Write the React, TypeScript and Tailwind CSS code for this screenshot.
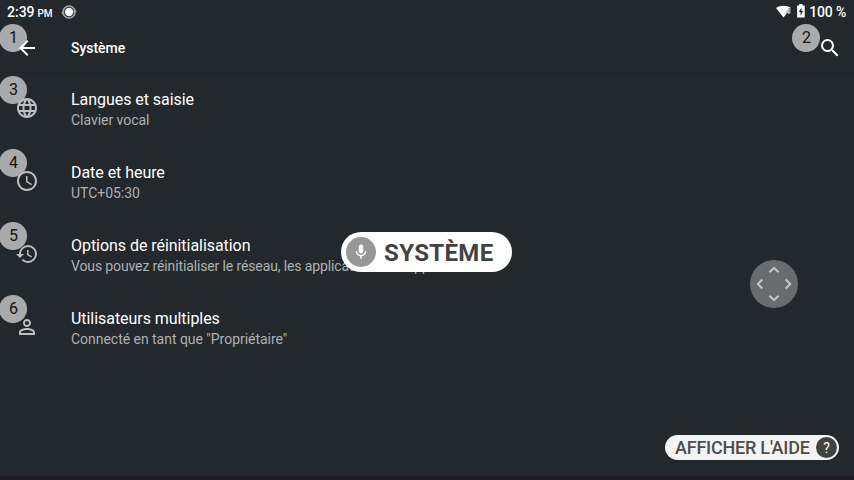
import type { ReactNode } from 'react';
import { MdAccessTime, MdArrowBack, MdHistory, MdLanguage, MdMic, MdPersonOutline, MdSearch } from 'react-icons/md';

function Badge({ n, className }: { n: number; className: string }) {
  return (
    <span
      className={`absolute flex size-7 items-center justify-center rounded-full bg-[#a9aaab] pl-px text-[16px] leading-none text-[#111] ${className}`}
    >
      {n}
    </span>
  );
}

function StatusBar() {
  return (
    <div className="flex h-6 items-center pr-2 pl-[7px] font-medium text-white">
      <span className="text-[14px] leading-6">2:39</span>
      <span className="ml-[3px] pt-[3px] text-[10px] leading-5 tracking-[-0.3px]">PM</span>
      <svg className="ml-[9px] size-4" viewBox="0 0 16 16">
        <circle cx="8" cy="8" r="6" fill="none" stroke="#a5a8aa" strokeWidth="1.7" />
        <path d="M0.3 8h3.4l-1.7 2.8zM15.7 8h-3.4l1.7-2.8z" fill="#a5a8aa" />
        <circle cx="8" cy="8" r="4.2" fill="#fff" />
      </svg>
      <svg className="ml-auto h-4 w-[15px]" viewBox="0 0 15 16">
        <path d="M0 4.1C4.3.9 10.7.9 15 4.1L7.5 13.4z" fill="#fff" />
        <path d="M14.9 4v5.5h-4.2V7.3L13 4z" fill="#697074" />
        <path d="M12.9 5l-2.2 3.3h3M12.9 5v5" fill="none" stroke="#dedfe0" strokeWidth="0.9" />
      </svg>
      <svg className="-mt-1 ml-[5px] h-4 w-[10px]" viewBox="0 0 10 16">
        <path d="M3.2 2h3.4v1.5h2.1v12H1.1v-12h2.1z" fill="#fff" />
        <path d="M5.5 5.6L2.8 10h1.7v3.5L7.2 9H5.5z" fill="#22282c" />
      </svg>
      <span className="ml-[3px] text-[14px] leading-6 tracking-[-0.2px]">100 %</span>
    </div>
  );
}

function Header() {
  return (
    <header className="relative flex h-12 items-center pr-[12px] pl-[15px] shadow-[0_1px_0_#1f2427]">
      <Badge n={1} className="top-0 -left-px" />
      <MdArrowBack className="relative size-6 text-white" />
      <h1 className="ml-8 text-[14px] leading-5 font-medium tracking-[-0.03px] text-white">Système</h1>
      <MdSearch className="relative ml-auto size-6 text-white" />
      <Badge n={2} className="top-0 left-[792px]" />
    </header>
  );
}

interface RowProps {
  n: number;
  icon: ReactNode;
  title: string;
  subtitle: string;
  tracking?: string;
}

function Row({ n, icon, title, subtitle, tracking = 'tracking-[-0.03px]' }: RowProps) {
  return (
    <li className="relative flex h-[73px] pt-[18px] pl-[15px]">
      <Badge n={n} className="top-[4px] -left-px" />
      <span className="relative mt-[6px] size-6 text-[24px] text-[#bdbfc0]">{icon}</span>
      <div className="ml-8">
        <p className="text-[16px] leading-[19px] tracking-[-0.05px] text-white">{title}</p>
        <p className={`mt-[3px] text-[14px] leading-[17px] text-[#afb1b3] ${tracking}`}>{subtitle}</p>
      </div>
    </li>
  );
}

export default function App() {
  return (
    <div
      className="relative flex h-[480px] w-[854px] flex-col overflow-hidden bg-[#22282c]"
      style={{ fontFamily: 'Roboto, "Liberation Sans", sans-serif' }}
    >
      <StatusBar />
      <Header />
      <ul className="flex-1">
        <Row n={3} icon={<MdLanguage />} title="Langues et saisie" subtitle="Clavier vocal" />
        <Row n={4} icon={<MdAccessTime />} title="Date et heure" subtitle="UTC+05:30" />
        <Row
          n={5}
          icon={<MdHistory />}
          title="Options de réinitialisation"
          subtitle="Vous pouvez réinitialiser le réseau, les applications ou l'appareil"
          tracking="tracking-[-0.13px]"
        />
        <Row n={6} icon={<MdPersonOutline />} title="Utilisateurs multiples" subtitle={'Connecté en tant que "Propriétaire"'} />
      </ul>
      <div className="h-1 bg-[#1d1a22]" />

      <div className="absolute top-[232px] left-[341px] flex h-10 w-[171px] items-center rounded-full bg-white pl-[5px]">
        <span className="flex size-[30px] items-center justify-center rounded-full bg-[#979797]">
          <MdMic className="size-[18px] text-white" />
        </span>
        <span className="ml-2 pt-[2px] text-[24px] leading-none font-bold tracking-[0.35px] text-[#424242]">SYSTÈME</span>
      </div>

      <svg className="absolute top-[260px] left-[750px] size-12" viewBox="0 0 48 48">
        <circle cx="24" cy="24" r="24" fill="#686c6e" />
        <path
          d="M19.5 12.3L24 7.8l4.5 4.5M19.5 35.7l4.5 4.5 4.5-4.5M12.3 19.5L7.8 24l4.5 4.5M35.7 19.5l4.5 4.5-4.5 4.5"
          fill="none"
          stroke="#c5c7c8"
          strokeWidth="2"
        />
      </svg>

      <div className="absolute top-[435px] left-[665px] flex h-[25px] w-[174px] items-center rounded-full bg-[#f4f4f4] pl-[10px]">
        <span className="text-[18px] leading-none font-medium tracking-[-0.22px] whitespace-nowrap text-[#4c4c4c]">
          AFFICHER L'AIDE
        </span>
        <span className="absolute top-[2px] right-[2px] flex size-[21px] items-center justify-center rounded-full bg-[#424242] text-[14px] leading-none text-white">
          ?
        </span>
      </div>
    </div>
  );
}
